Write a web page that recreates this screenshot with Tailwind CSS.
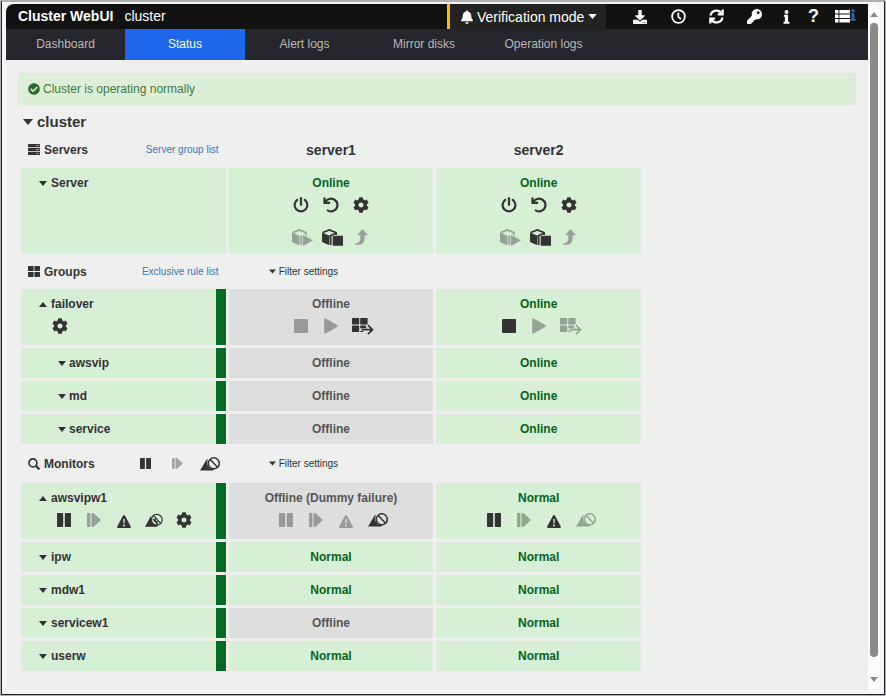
<!DOCTYPE html>
<html lang="en">
<head>
    <meta charset="UTF-8">
    <meta name="viewport" content="width=device-width, initial-scale=1.0">
    <title>Cluster WebUI</title>
    <script src="https://cdn.jsdelivr.net/npm/@tailwindcss/browser@4"></script>
</head>
<body class="bg-[#b0b0b0] min-h-screen flex p-px font-['Liberation_Sans',Arial,sans-serif] text-xs text-[#333]">
    <!-- Icon set -->
    <svg class="hidden">
        <symbol id="caret-down" viewBox="0 0 10 6"><path d="M0 0h10L5 6z" fill="currentColor" /></symbol>
        <symbol id="caret-up" viewBox="0 0 10 6"><path d="M0 6h10L5 0z" fill="currentColor" /></symbol>
        <symbol id="bell" viewBox="0 0 448 512"><path fill="currentColor" d="M224 512c35.32 0 63.97-28.65 63.97-64H160.03c0 35.35 28.65 64 63.97 64zm215.39-149.71c-19.32-20.76-55.47-51.99-55.47-154.29 0-77.7-54.48-139.9-127.94-155.16V32c0-17.67-14.32-32-31.98-32s-31.98 14.33-31.98 32v20.84C118.56 68.1 64.08 130.3 64.08 208c0 102.3-36.15 133.53-55.47 154.29-6 6.45-8.66 14.16-8.61 21.71.11 16.4 12.98 32 32.1 32h383.8c19.12 0 32-15.6 32.1-32 .05-7.55-2.61-15.27-8.61-21.71z" /></symbol>
        <symbol id="download" viewBox="0 0 512 512"><path fill="currentColor" d="M216 0h80c13.3 0 24 10.7 24 24v168h87.7c17.8 0 26.7 21.5 14.1 34.1L269.7 378.3c-7.5 7.5-19.8 7.5-27.3 0L90.1 226.1c-12.6-12.6-3.7-34.1 14.1-34.1H192V24c0-13.3 10.7-24 24-24zm296 376v112c0 13.3-10.7 24-24 24H24c-13.3 0-24-10.7-24-24V376c0-13.3 10.7-24 24-24h146.7l49 49c20.1 20.1 52.5 20.1 72.6 0l49-49H488c13.3 0 24 10.7 24 24zm-124 88c0-11-9-20-20-20s-20 9-20 20 9 20 20 20 20-9 20-20zm64 0c0-11-9-20-20-20s-20 9-20 20 9 20 20 20 20-9 20-20z" /></symbol>
        <symbol id="clock" viewBox="0 0 16 16"><g fill="none" stroke="currentColor" stroke-width="1.9"><circle cx="8" cy="8" r="6.8" /><path d="M7.8 3.6v4.8l2.8 2.2" /></g></symbol>
        <symbol id="refresh" viewBox="0 0 16 16"><g fill="none" stroke="currentColor" stroke-width="2.4"><path d="M1.6 7A6.5 6.5 0 0 1 13.6 5M14.6 .6v5.2H9.4M14.4 9A6.5 6.5 0 0 1 2.4 11M1.4 15.4v-5.2h5.2" /></g></symbol>
        <symbol id="key" viewBox="0 0 512 512"><path fill="currentColor" d="M512 176.001C512 273.203 433.202 352 336 352c-11.22 0-22.19-1.062-32.827-3.069l-24.012 27.014A23.999 23.999 0 0 1 261.223 384H224v40c0 13.255-10.745 24-24 24h-40v40c0 13.255-10.745 24-24 24H24c-13.255 0-24-10.745-24-24v-78.059c0-6.365 2.529-12.47 7.029-16.971l161.802-161.802C163.108 213.814 160 195.271 160 176 160 78.798 238.797.001 335.999 0 433.488-.001 512 78.511 512 176.001zM336 128c0 26.51 21.49 48 48 48s48-21.49 48-48-21.49-48-48-48-48 21.49-48 48z" /></symbol>
        <symbol id="info" viewBox="0 0 8 16"><path fill="currentColor" d="M1 5.5h4.8v7.8h1.6v2.4H.6v-2.4h1.6V7.8H1z" /><circle cx="4" cy="2.3" r="2.2" fill="currentColor" /></symbol>
        <symbol id="list" viewBox="0 0 15 13"><path fill="currentColor" d="M0 0h3.5v3.6H0zM4.4 0H15v3.6H4.4zM0 4.5h3.5v3.6H0zM4.4 4.5H15v3.6H4.4zM0 9h3.5v3.6H0zM4.4 9H15v3.6H4.4z" /></symbol>
        <symbol id="check" viewBox="0 0 512 512"><path fill="currentColor" d="M504 256c0 136.967-111.033 248-248 248S8 392.967 8 256 119.033 8 256 8s248 111.033 248 248zM227.314 387.314l184-184c6.248-6.248 6.248-16.379 0-22.627l-22.627-22.627c-6.248-6.249-16.379-6.249-22.628 0L216 308.118l-70.059-70.059c-6.248-6.248-16.379-6.248-22.628 0l-22.627 22.627c-6.248 6.248-6.248 16.379 0 22.627l104 104c6.249 6.249 16.379 6.249 22.628.001z" /></symbol>
        <symbol id="servers" viewBox="0 0 12 11"><g fill="currentColor"><rect width="12" height="3.2" rx=".6" /><rect y="3.9" width="12" height="3.2" rx=".6" /><rect y="7.8" width="12" height="3.2" rx=".6" /></g><path d="M8 1.6h3M8 5.5h3M8 9.4h3" stroke="#999" /></symbol>
        <symbol id="groups" viewBox="0 0 12 11"><g fill="currentColor"><rect width="5.6" height="5" rx=".6" /><rect x="6.4" width="5.6" height="5" rx=".6" /><rect y="5.9" width="5.6" height="5" rx=".6" /><rect x="6.4" y="5.9" width="5.6" height="5" rx=".6" /></g></symbol>
        <symbol id="search" viewBox="0 0 12 12"><g fill="none" stroke="currentColor"><circle cx="4.9" cy="4.9" r="4" stroke-width="1.7" /><path d="M7.9 7.9l3.5 3.5" stroke-width="2.2" /></g></symbol>
        <symbol id="power" viewBox="0 0 16 16"><path fill="none" stroke="currentColor" stroke-width="2.2" stroke-linecap="round" d="M4.200 2.900a6.400 6.400 0 1 0 7.600 0M8 1.200v6.600" /></symbol>
        <symbol id="undo" viewBox="0 0 16 16"><path fill="none" stroke="currentColor" stroke-width="2.2" d="M1.500.4v5.400h5.600M2.200 5.400A6.400 6.400 0 1 1 4 13" /></symbol>
        <symbol id="cog" viewBox="0 0 512 512"><path fill="currentColor" d="M487.4 315.7l-42.6-24.6c4.3-23.2 4.3-47 0-70.2l42.6-24.6c4.9-2.8 7.1-8.6 5.5-14-11.1-35.6-30-67.8-54.7-94.6-3.8-4.1-10-5.1-14.8-2.3L380.8 110c-17.9-15.4-38.5-27.3-60.8-35.1V25.8c0-5.6-3.9-10.5-9.4-11.7-36.7-8.2-74.3-7.8-109.2 0-5.5 1.2-9.4 6.1-9.4 11.7V75c-22.2 7.9-42.8 19.8-60.8 35.1L88.7 85.5c-4.9-2.8-11-1.9-14.8 2.3-24.7 26.7-43.6 58.9-54.7 94.6-1.7 5.4.6 11.2 5.5 14L67.3 221c-4.3 23.2-4.3 47 0 70.2l-42.6 24.6c-4.9 2.8-7.1 8.6-5.5 14 11.1 35.6 30 67.8 54.7 94.6 3.8 4.1 10 5.1 14.8 2.3l42.6-24.6c17.9 15.4 38.5 27.3 60.8 35.1v49.2c0 5.6 3.9 10.5 9.4 11.7 36.7 8.2 74.3 7.8 109.2 0 5.5-1.2 9.4-6.1 9.4-11.7v-49.2c22.2-7.9 42.8-19.8 60.8-35.1l42.6 24.6c4.9 2.8 11 1.9 14.8-2.3 24.7-26.7 43.6-58.9 54.7-94.6 1.5-5.5-.7-11.3-5.6-14.1zM256 336c-44.1 0-80-35.9-80-80s35.9-80 80-80 80 35.9 80 80-35.9 80-80 80z" /></symbol>
        <symbol id="cube-play" viewBox="0 0 21 17"><path fill="currentColor" d="M0 3.600l7.400 3.200v9.400L0 12.900zM8.300 7l2-.900v9.200l-2 .9zM11 6l10 5.400L11 17z" /><path fill="none" stroke="currentColor" stroke-width="1.700" d="M.8 3.500L7.300.9l6.500 2.600v2.800" /></symbol>
        <symbol id="cube-stop" viewBox="0 0 21 17"><path fill="currentColor" d="M0 3.600l7.400 3.200v9.400L0 12.900zM10.700 6.800H21v10H10.700z" /><path fill="none" stroke="currentColor" stroke-width="1.700" d="M.8 3.500L7.300.9l6.500 2.600M7.300 7.200l6.800-3.200v2M8.700 7v9" /></symbol>
        <symbol id="level-up" viewBox="0 0 14 16"><path fill="currentColor" d="M8.400 0L14 6.200h-3.500v3.200c0 4.200-2.500 6.400-6.500 6.400-1.600 0-2.800-.300-4-1.400 3.800-.200 6.300-1.400 6.300-5V6.200H3.300z" /></symbol>
        <symbol id="stop" viewBox="0 0 14 14"><rect width="14" height="14" rx="1" fill="currentColor" /></symbol>
        <symbol id="play" viewBox="0 0 14 16"><path fill="currentColor" d="M.2 1.200C.2.300.8 0 1.600.4l11.600 6.700c.8.500.8 1.300 0 1.800L1.600 15.600c-.8.4-1.400 0-1.400-.8z" /></symbol>
        <symbol id="pause" viewBox="0 0 14 14"><g fill="currentColor"><rect width="6.200" height="14" rx="1" /><rect x="7.800" width="6.200" height="14" rx="1" /></g></symbol>
        <symbol id="resume" viewBox="0 0 14 14"><path fill="currentColor" d="M0 .6L.6 0h2.200L3.400.6v12.800l-.6.600H.6L0 13.400zM4.500 0h1.700L14 7l-7.800 7H4.500z" /></symbol>
        <symbol id="failover" viewBox="0 0 22 17"><g fill="currentColor"><rect width="7.200" height="6.600" rx=".6" /><rect x="8.200" width="7.400" height="6.600" rx=".6" /><rect y="7.500" width="7.200" height="6.600" rx=".6" /><path d="M8.200 7.500h6l-.6 1.200 1.300 1.500H8.200zM8.200 12.900h3v1.200h-3z" /></g><path fill="none" stroke="currentColor" stroke-width="1.700" d="M9.500 11.700h11M16 7.200l4.500 4.500L16 16.200" /></symbol>
        <symbol id="warning" viewBox="0 0 14 13"><path fill="currentColor" fill-rule="evenodd" d="M6 .7a1.100 1.100 0 0 1 2 0l5.800 10.700a1 1 0 0 1-.9 1.500H1.100a1 1 0 0 1-.9-1.500zM6.200 4l.3 4.600h1L7.800 4zM7 9.500a1 1 0 1 0 0 2 1 1 0 0 0 0-2z" /></symbol>
        <symbol id="warning-off" viewBox="0 0 20 14"><path fill="currentColor" d="M0 13.400L6.800 2.300h1C6.500 6.500 7.600 9.600 10.300 11.600l3.600.6-.4 1.200H0z" /><g fill="none" stroke="currentColor" stroke-width="1.500"><circle cx="13.800" cy="6.300" r="5.500" /><path d="M10 2.300l7.600 8" /></g></symbol>
        <symbol id="warning-mute" viewBox="0 0 18 14"><path fill="currentColor" d="M0 13.800L5.600 3.600h.8c-.7 3.800 0 6 2.300 7.800l3.600.4.4 2H0z" /><g fill="none" stroke="currentColor" stroke-width="1.200"><circle cx="11.800" cy="6.800" r="5.400" /><path d="M8 1.800l8 9M8 6l5 5.500M10.500 5.500a2 2 0 0 0 2.500 3" /></g></symbol>
    </svg>

    <div class="flex-1 min-w-0 flex bg-[#f6f6f6] border border-[#172130] border-t-[#b0b0b0] px-1 pt-0.5 pb-1">
        <div class="flex-1 min-w-0 flex rounded-lg overflow-hidden bg-[#efefef]">
            <div class="flex-1 min-w-0">
                <!-- Title bar -->
                <header class="flex h-[25px] bg-[#111] text-white text-sm">
                    <h1 class="pl-3 font-bold leading-[25px]">Cluster WebUI</h1>
                    <span class="pl-[11px] leading-[25px]">cluster</span>
                    <button type="button" class="ml-auto flex items-center gap-1 w-[159px] pl-[11px] whitespace-nowrap bg-[#222] border-l-[3px] border-[#f0c000]">
                        <svg class="w-3 h-[14px]"><use href="#bell" /></svg>
                        Verification mode
                        <svg class="w-[9px] h-[5px]"><use href="#caret-down" /></svg>
                    </button>
                    <div class="flex pl-[15px] pr-[5px]">
                        <button type="button" aria-label="Download" class="w-[38px] grid place-items-center"><svg class="size-[14px]"><use href="#download" /></svg></button>
                        <button type="button" aria-label="Time information" class="w-[38px] grid place-items-center"><svg class="size-[15px]"><use href="#clock" /></svg></button>
                        <button type="button" aria-label="Refresh" class="w-[38px] grid place-items-center"><svg class="size-[15px]"><use href="#refresh" /></svg></button>
                        <button type="button" aria-label="Access" class="w-[38px] grid place-items-center"><svg class="size-[15px]"><use href="#key" /></svg></button>
                        <button type="button" aria-label="Information" class="w-[27px] grid place-items-center"><svg class="w-[7px] h-[14px]"><use href="#info" /></svg></button>
                        <button type="button" class="w-[27px] text-lg leading-[25px] font-bold">?</button>
                        <button type="button" aria-label="Alert list" class="w-9 flex items-center justify-center">
                            <svg class="w-[15px] h-[13px] shrink-0"><use href="#list" /></svg>
                            <svg class="w-[6px] h-3 mb-1 shrink-0 text-[#2a6db5]"><use href="#info" /></svg>
                        </button>
                    </div>
                </header>

                <!-- Tabs -->
                <nav class="flex h-[31px] bg-[#25262b] text-[#b9b9bb] text-center leading-[31px]">
                    <a href="#" class="w-[119px]">Dashboard</a>
                    <a href="#" class="w-[120px] bg-[#1d67ec] text-white">Status</a>
                    <a href="#" class="w-[119px]">Alert logs</a>
                    <a href="#" class="w-[120px]">Mirror disks</a>
                    <a href="#" class="w-[119px]">Operation logs</a>
                </nav>

                <main class="px-3 pt-[13px] pb-4">
                    <div class="flex items-center gap-[3px] h-8 pl-[9px] rounded-xs border border-[#d8ecd0] bg-[#ddefd8] text-[#3f7b41]">
                        <svg class="size-3 text-[#2c6e2f]"><use href="#check" /></svg>
                        Cluster is operating normally
                    </div>

                    <h2 class="mt-2 pl-[5px]">
                        <button type="button" class="flex items-center gap-1 text-[15px] leading-[18px] font-bold">
                            <svg class="w-[10px] h-[6px]"><use href="#caret-down" /></svg> cluster
                        </button>
                    </h2>

                    <table class="w-full max-w-[626px] table-fixed border-separate border-spacing-[3px] leading-4">
                        <!-- Servers -->
                        <tbody>
                            <tr class="h-[31px]">
                                <th class="p-0">
                                    <div class="flex items-center gap-1 px-[7px]">
                                        <svg class="w-3 h-[11px]"><use href="#servers" /></svg> Servers
                                        <a href="#" class="ml-auto text-[10px] font-normal text-[#337ab7]">Server group list</a>
                                    </div>
                                </th>
                                <th scope="col" class="p-0 pt-px text-sm leading-4">server1</th>
                                <th scope="col" class="p-0 pt-px text-sm leading-4">server2</th>
                            </tr>
                            <tr class="h-[86px] align-top">
                                <th scope="row" class="bg-[#d6efd5] p-0 pt-[7px]">
                                    <button type="button" class="flex items-center gap-1 pl-[18px] font-bold"><svg class="w-2 h-[5px]"><use href="#caret-down" /></svg> Server</button>
                                </th>
                                <td class="bg-[#d6efd5] p-0 pt-[7px] text-center">
                                    <div class="font-bold text-[#04641f]">Online</div>
                                    <div class="flex justify-center h-7">
                                        <button type="button" aria-label="Shutdown server" class="w-[30px] grid place-items-center"><svg class="size-4"><use href="#power" /></svg></button>
                                        <button type="button" aria-label="Reboot server" class="w-[30px] grid place-items-center"><svg class="size-4"><use href="#undo" /></svg></button>
                                        <button type="button" aria-label="Server settings" class="w-[30px] grid place-items-center"><svg class="size-4"><use href="#cog" /></svg></button>
                                    </div>
                                    <div class="flex justify-center h-7 mt-1">
                                        <button type="button" aria-label="Start service" disabled class="w-[30px] pl-1 grid place-items-center disabled:opacity-40"><svg class="w-[21px] h-[17px]"><use href="#cube-play" /></svg></button>
                                        <button type="button" aria-label="Stop service" class="w-[30px] pl-1 grid place-items-center"><svg class="w-[21px] h-[17px]"><use href="#cube-stop" /></svg></button>
                                        <button type="button" aria-label="Recover server" disabled class="w-[30px] grid place-items-center disabled:opacity-40"><svg class="w-[14px] h-4"><use href="#level-up" /></svg></button>
                                    </div>
                                </td>
                                <td class="bg-[#d6efd5] p-0 pt-[7px] text-center">
                                    <div class="font-bold text-[#04641f]">Online</div>
                                    <div class="flex justify-center h-7">
                                        <button type="button" aria-label="Shutdown server" class="w-[30px] grid place-items-center"><svg class="size-4"><use href="#power" /></svg></button>
                                        <button type="button" aria-label="Reboot server" class="w-[30px] grid place-items-center"><svg class="size-4"><use href="#undo" /></svg></button>
                                        <button type="button" aria-label="Server settings" class="w-[30px] grid place-items-center"><svg class="size-4"><use href="#cog" /></svg></button>
                                    </div>
                                    <div class="flex justify-center h-7 mt-1">
                                        <button type="button" aria-label="Start service" disabled class="w-[30px] pl-1 grid place-items-center disabled:opacity-40"><svg class="w-[21px] h-[17px]"><use href="#cube-play" /></svg></button>
                                        <button type="button" aria-label="Stop service" class="w-[30px] pl-1 grid place-items-center"><svg class="w-[21px] h-[17px]"><use href="#cube-stop" /></svg></button>
                                        <button type="button" aria-label="Recover server" disabled class="w-[30px] grid place-items-center disabled:opacity-40"><svg class="w-[14px] h-4"><use href="#level-up" /></svg></button>
                                    </div>
                                </td>
                            </tr>
                        </tbody>

                        <!-- Groups -->
                        <tbody>
                            <tr class="h-[29px]">
                                <th class="p-0">
                                    <div class="flex items-center gap-1 px-[7px]">
                                        <svg class="w-3 h-[11px]"><use href="#groups" /></svg> Groups
                                        <a href="#" class="ml-auto text-[10px] font-normal text-[#337ab7]">Exclusive rule list</a>
                                    </div>
                                </th>
                                <td class="p-0 pl-10">
                                    <button type="button" class="flex items-center gap-[3px] text-[10px] leading-4"><svg class="w-[7px] h-[5px]"><use href="#caret-down" /></svg> Filter settings</button>
                                </td>
                                <td class="p-0"></td>
                            </tr>
                            <tr class="h-14 align-top">
                                <th scope="row" class="bg-[#d6efd5] border-r-[10px] border-[#046a25] p-0 pt-[7px]">
                                    <button type="button" class="flex items-center gap-1 pl-[18px] font-bold"><svg class="w-2 h-[5px]"><use href="#caret-up" /></svg> failover</button>
                                    <div class="flex h-7 pl-6">
                                        <button type="button" aria-label="Group settings" class="w-[30px] grid place-items-center"><svg class="size-4"><use href="#cog" /></svg></button>
                                    </div>
                                </th>
                                <td class="bg-[#dedede] p-0 pt-[7px] text-center">
                                    <div class="font-bold text-[#555]">Offline</div>
                                    <div class="flex justify-center h-7">
                                        <button type="button" aria-label="Stop group" disabled class="w-[30px] grid place-items-center disabled:opacity-40"><svg class="size-[14px]"><use href="#stop" /></svg></button>
                                        <button type="button" aria-label="Start group" disabled class="w-[30px] grid place-items-center disabled:opacity-40"><svg class="w-[14px] h-4"><use href="#play" /></svg></button>
                                        <button type="button" aria-label="Move group" class="w-[30px] pl-1 grid place-items-center"><svg class="w-[22px] h-[17px]"><use href="#failover" /></svg></button>
                                    </div>
                                </td>
                                <td class="bg-[#d6efd5] p-0 pt-[7px] text-center">
                                    <div class="font-bold text-[#04641f]">Online</div>
                                    <div class="flex justify-center h-7">
                                        <button type="button" aria-label="Stop group" class="w-[30px] grid place-items-center"><svg class="size-[14px]"><use href="#stop" /></svg></button>
                                        <button type="button" aria-label="Start group" disabled class="w-[30px] grid place-items-center disabled:opacity-40"><svg class="w-[14px] h-4"><use href="#play" /></svg></button>
                                        <button type="button" aria-label="Move group" disabled class="w-[30px] pl-1 grid place-items-center disabled:opacity-40"><svg class="w-[22px] h-[17px]"><use href="#failover" /></svg></button>
                                    </div>
                                </td>
                            </tr>
                            <tr class="h-[30px]">
                                <th scope="row" class="bg-[#d6efd5] border-r-[10px] border-[#046a25] p-0">
                                    <button type="button" class="flex items-center gap-[3px] pl-[37px] font-bold"><svg class="w-2 h-[5px]"><use href="#caret-down" /></svg> awsvip</button>
                                </th>
                                <td class="bg-[#dedede] p-0 text-center font-bold text-[#555]">Offline</td>
                                <td class="bg-[#d6efd5] p-0 text-center font-bold text-[#04641f]">Online</td>
                            </tr>
                            <tr class="h-[30px]">
                                <th scope="row" class="bg-[#d6efd5] border-r-[10px] border-[#046a25] p-0">
                                    <button type="button" class="flex items-center gap-[3px] pl-[37px] font-bold"><svg class="w-2 h-[5px]"><use href="#caret-down" /></svg> md</button>
                                </th>
                                <td class="bg-[#dedede] p-0 text-center font-bold text-[#555]">Offline</td>
                                <td class="bg-[#d6efd5] p-0 text-center font-bold text-[#04641f]">Online</td>
                            </tr>
                            <tr class="h-[30px]">
                                <th scope="row" class="bg-[#d6efd5] border-r-[10px] border-[#046a25] p-0">
                                    <button type="button" class="flex items-center gap-[3px] pl-[37px] font-bold"><svg class="w-2 h-[5px]"><use href="#caret-down" /></svg> service</button>
                                </th>
                                <td class="bg-[#dedede] p-0 text-center font-bold text-[#555]">Offline</td>
                                <td class="bg-[#d6efd5] p-0 text-center font-bold text-[#04641f]">Online</td>
                            </tr>
                        </tbody>

                        <!-- Monitors -->
                        <tbody>
                            <tr class="h-[33px]">
                                <th class="p-0">
                                    <div class="flex items-center gap-1 pl-[7px]">
                                        <svg class="size-3"><use href="#search" /></svg> Monitors
                                        <div class="flex ml-auto">
                                            <button type="button" aria-label="Suspend all monitors" class="w-8 grid place-items-center"><svg class="size-[11px]"><use href="#pause" /></svg></button>
                                            <button type="button" aria-label="Resume all monitors" disabled class="w-8 grid place-items-center disabled:opacity-40"><svg class="size-[11px]"><use href="#resume" /></svg></button>
                                            <button type="button" aria-label="Disable failure verification" class="w-8 grid place-items-center"><svg class="w-5 h-[14px]"><use href="#warning-off" /></svg></button>
                                        </div>
                                    </div>
                                </th>
                                <td class="p-0 pl-10">
                                    <button type="button" class="flex items-center gap-[3px] text-[10px] leading-4"><svg class="w-[7px] h-[5px]"><use href="#caret-down" /></svg> Filter settings</button>
                                </td>
                                <td class="p-0"></td>
                            </tr>
                            <tr class="h-14 align-top">
                                <th scope="row" class="bg-[#d6efd5] border-r-[10px] border-[#046a25] p-0 pt-[7px]">
                                    <button type="button" class="flex items-center gap-1 pl-[18px] font-bold"><svg class="w-2 h-[5px]"><use href="#caret-up" /></svg> awsvipw1</button>
                                    <div class="flex h-7 pl-7">
                                        <button type="button" aria-label="Suspend monitor" class="w-[30px] grid place-items-center"><svg class="size-[14px]"><use href="#pause" /></svg></button>
                                        <button type="button" aria-label="Resume monitor" disabled class="w-[30px] grid place-items-center disabled:opacity-40"><svg class="size-[14px]"><use href="#resume" /></svg></button>
                                        <button type="button" aria-label="Enable dummy failure" class="w-[30px] pt-0.5 grid place-items-center"><svg class="w-[14px] h-[13px]"><use href="#warning" /></svg></button>
                                        <button type="button" aria-label="Disable dummy failure" class="w-[30px] grid place-items-center"><svg class="w-[18px] h-[14px]"><use href="#warning-mute" /></svg></button>
                                        <button type="button" aria-label="Monitor settings" class="w-[30px] grid place-items-center"><svg class="size-4"><use href="#cog" /></svg></button>
                                    </div>
                                </th>
                                <td class="bg-[#dedede] p-0 pt-[7px] text-center">
                                    <div class="font-bold text-[#555]">Offline (Dummy failure)</div>
                                    <div class="flex justify-center h-7">
                                        <button type="button" aria-label="Suspend monitor" disabled class="w-[30px] grid place-items-center disabled:opacity-40"><svg class="size-[14px]"><use href="#pause" /></svg></button>
                                        <button type="button" aria-label="Resume monitor" disabled class="w-[30px] grid place-items-center disabled:opacity-40"><svg class="size-[14px]"><use href="#resume" /></svg></button>
                                        <button type="button" aria-label="Enable dummy failure" disabled class="w-[30px] pt-0.5 grid place-items-center disabled:opacity-40"><svg class="w-[14px] h-[13px]"><use href="#warning" /></svg></button>
                                        <button type="button" aria-label="Disable dummy failure" class="w-[30px] pl-1 grid place-items-center"><svg class="w-5 h-[14px]"><use href="#warning-off" /></svg></button>
                                    </div>
                                </td>
                                <td class="bg-[#d6efd5] p-0 pt-[7px] text-center">
                                    <div class="font-bold text-[#04641f]">Normal</div>
                                    <div class="flex justify-center h-7">
                                        <button type="button" aria-label="Suspend monitor" class="w-[30px] grid place-items-center"><svg class="size-[14px]"><use href="#pause" /></svg></button>
                                        <button type="button" aria-label="Resume monitor" disabled class="w-[30px] grid place-items-center disabled:opacity-40"><svg class="size-[14px]"><use href="#resume" /></svg></button>
                                        <button type="button" aria-label="Enable dummy failure" class="w-[30px] pt-0.5 grid place-items-center"><svg class="w-[14px] h-[13px]"><use href="#warning" /></svg></button>
                                        <button type="button" aria-label="Disable dummy failure" disabled class="w-[30px] pl-1 grid place-items-center disabled:opacity-40"><svg class="w-5 h-[14px]"><use href="#warning-off" /></svg></button>
                                    </div>
                                </td>
                            </tr>
                            <tr class="h-[30px]">
                                <th scope="row" class="bg-[#d6efd5] border-r-[10px] border-[#046a25] p-0">
                                    <button type="button" class="flex items-center gap-1 pl-[18px] font-bold"><svg class="w-2 h-[5px]"><use href="#caret-down" /></svg> ipw</button>
                                </th>
                                <td class="bg-[#d6efd5] p-0 text-center font-bold text-[#04641f]">Normal</td>
                                <td class="bg-[#d6efd5] p-0 text-center font-bold text-[#04641f]">Normal</td>
                            </tr>
                            <tr class="h-[30px]">
                                <th scope="row" class="bg-[#d6efd5] border-r-[10px] border-[#046a25] p-0">
                                    <button type="button" class="flex items-center gap-1 pl-[18px] font-bold"><svg class="w-2 h-[5px]"><use href="#caret-down" /></svg> mdw1</button>
                                </th>
                                <td class="bg-[#d6efd5] p-0 text-center font-bold text-[#04641f]">Normal</td>
                                <td class="bg-[#d6efd5] p-0 text-center font-bold text-[#04641f]">Normal</td>
                            </tr>
                            <tr class="h-[30px]">
                                <th scope="row" class="bg-[#d6efd5] border-r-[10px] border-[#046a25] p-0">
                                    <button type="button" class="flex items-center gap-1 pl-[18px] font-bold"><svg class="w-2 h-[5px]"><use href="#caret-down" /></svg> servicew1</button>
                                </th>
                                <td class="bg-[#dedede] p-0 text-center font-bold text-[#555]">Offline</td>
                                <td class="bg-[#d6efd5] p-0 text-center font-bold text-[#04641f]">Normal</td>
                            </tr>
                            <tr class="h-[30px]">
                                <th scope="row" class="bg-[#d6efd5] border-r-[10px] border-[#046a25] p-0">
                                    <button type="button" class="flex items-center gap-1 pl-[18px] font-bold"><svg class="w-2 h-[5px]"><use href="#caret-down" /></svg> userw</button>
                                </th>
                                <td class="bg-[#d6efd5] p-0 text-center font-bold text-[#04641f]">Normal</td>
                                <td class="bg-[#d6efd5] p-0 text-center font-bold text-[#04641f]">Normal</td>
                            </tr>
                        </tbody>
                    </table>
                </main>
            </div>

            <!-- Scrollbar -->
            <div class="w-3 flex flex-col items-center bg-[#fcfcfc] text-[#8b8b8b] py-2">
                <svg class="w-2 h-[5px]"><use href="#caret-up" /></svg>
                <div class="flex-1 w-2 mt-[6px] mb-5 rounded-full bg-[#8b8b8b]"></div>
                <svg class="w-2 h-[5px]"><use href="#caret-down" /></svg>
            </div>
        </div>
    </div>
</body>
</html>
